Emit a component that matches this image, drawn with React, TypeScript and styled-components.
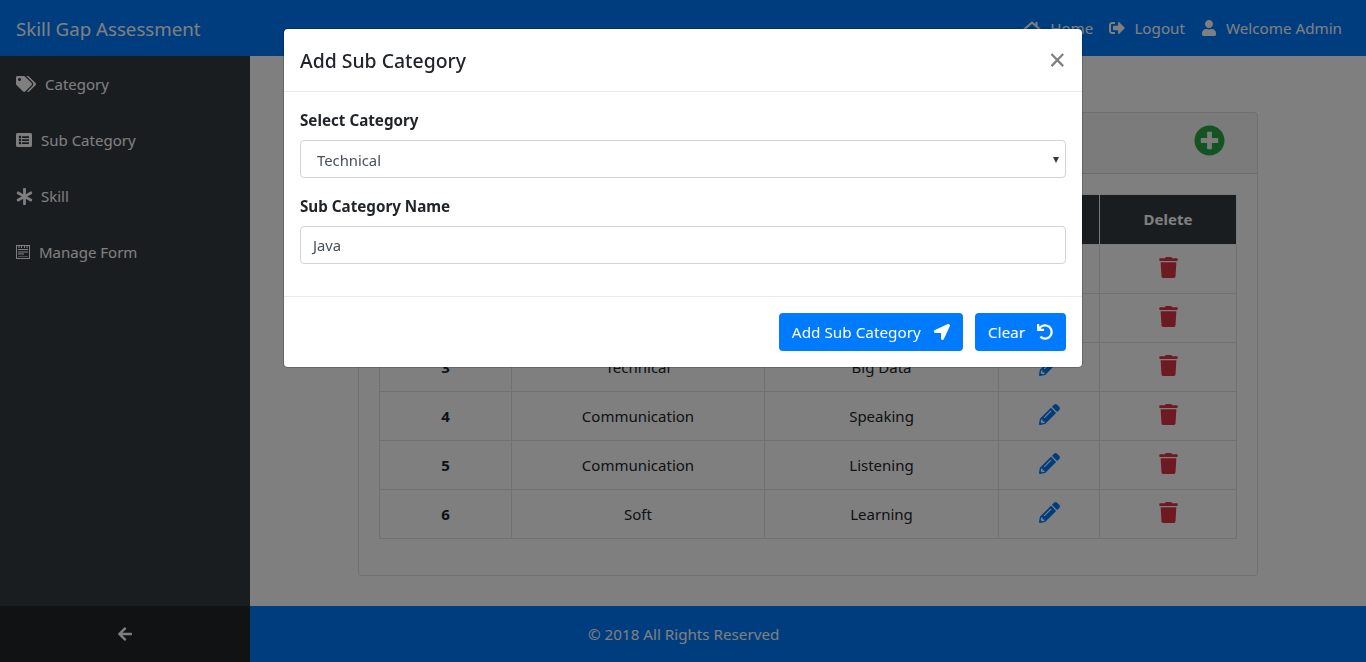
import React from 'react'
import styled, { createGlobalStyle } from 'styled-components'
import {
  FaTags,
  FaListAlt,
  FaAsterisk,
  FaSignOutAlt,
  FaUser,
  FaPlusCircle,
  FaPencilAlt,
  FaTrash,
  FaLocationArrow,
  FaUndo,
  FaArrowLeft,
} from 'react-icons/fa'

const GlobalStyle = createGlobalStyle`
  * {
    box-sizing: border-box;
  }
  html, body {
    margin: 0;
    height: 100%;
    overflow: hidden;
  }
  body {
    font-family: "Noto Sans", "Open Sans", sans-serif;
    font-size: 15px;
    color: #212529;
    background: #fff;
  }
`

const Page = styled.div`
  display: flex;
  flex-direction: column;
  height: 662px;
`

const Navbar = styled.header`
  display: flex;
  align-items: center;
  justify-content: space-between;
  height: 56px;
  padding: 0 24px 0 16px;
  background: #007bff;
`

const Brand = styled.span`
  font-size: 18.7px;
  color: #fff;
`

const NavLinks = styled.nav`
  display: flex;
  align-items: center;
  gap: 16px;
`

const NavLink = styled.a`
  display: flex;
  align-items: center;
  gap: 9px;
  color: #fff;
  font-size: 15.2px;
`

const Middle = styled.div`
  display: flex;
  flex: 1;
  min-height: 0;
`

const Sidebar = styled.aside`
  width: 250px;
  flex-shrink: 0;
  background: #343a40;
`

const SideItem = styled.div`
  display: flex;
  align-items: center;
  height: 56px;
  padding-left: 16px;
  color: #fff;
  font-size: 15px;
`

const SideLabel = styled.span<{ $gap: number }>`
  margin-left: ${({ $gap }) => $gap}px;
`

const Content = styled.main`
  flex: 1;
  padding: 56px 109px 30px 108px;
  background: #fff;
`

const Card = styled.section`
  border: 1px solid rgba(0, 0, 0, 0.125);
  border-radius: 4px;
  height: 464px;
`

const CardHeader = styled.div`
  display: flex;
  align-items: center;
  justify-content: flex-end;
  height: 61px;
  padding: 0 32px 5px 0;
  background: rgba(0, 0, 0, 0.03);
  border-bottom: 1px solid rgba(0, 0, 0, 0.125);
  color: #28a745;
`

const CardBody = styled.div`
  padding: 20px;
`

const Table = styled.table`
  width: 100%;
  border-collapse: collapse;
  table-layout: fixed;
  text-align: center;
`

const HeadCell = styled.th<{ $width: number }>`
  width: ${({ $width }) => $width}px;
  height: 50px;
  padding: 0 0 2px;
  background: #343a40;
  border: 1px solid #f4f5f6;
  color: #fff;
  font-size: 15px;
`

const Cell = styled.td<{ $strong?: boolean }>`
  height: 49px;
  padding: 0;
  border: 1px solid #dee2e6;
  font-weight: ${({ $strong }) => ($strong ? 700 : 400)};
`

const EditIcon = styled(FaPencilAlt)`
  display: block;
  margin: 0 auto 4px;
  color: #007bff;
`

const DeleteIcon = styled(FaTrash)`
  display: block;
  margin: 0 auto 4px;
  color: #dc3545;
`

const BottomBar = styled.footer`
  display: flex;
  height: 56px;
`

const Collapse = styled.div`
  display: flex;
  align-items: center;
  justify-content: center;
  width: 250px;
  background: #232527;
  color: #fff;
`

const Copyright = styled.div`
  display: flex;
  align-items: center;
  flex: 1;
  padding-left: 338px;
  background: #007bff;
  color: #fff;
  font-size: 15.2px;
`

const Backdrop = styled.div`
  position: fixed;
  inset: 0;
  background: rgba(0, 0, 0, 0.5);
`

const Modal = styled.div`
  position: fixed;
  top: 28px;
  left: 283px;
  width: 800px;
  background: #fff;
  background-clip: padding-box;
  border: 1px solid rgba(0, 0, 0, 0.2);
  border-radius: 4.8px;
`

const ModalHeader = styled.div`
  display: flex;
  align-items: center;
  justify-content: space-between;
  height: 63px;
  padding: 0 16px;
  border-bottom: 1px solid #e9ecef;
`

const ModalTitle = styled.h5`
  margin: 0;
  font-size: 19.4px;
  font-weight: 500;
`

const Close = styled.span`
  font-size: 30px;
  line-height: 1;
  font-weight: 400;
  color: #808080;
`

const ModalBody = styled.div`
  padding: 16px 16px 32px;
`

const Label = styled.label`
  display: block;
  margin-bottom: 8px;
  height: 24px;
  line-height: 24px;
  font-weight: 700;
  font-size: 15.2px;
`

const Group = styled.div`
  margin-bottom: 16px;
  &:last-child {
    margin-bottom: 0;
  }
`

const Field = styled.div<{ $inset: number }>`
  display: flex;
  align-items: center;
  justify-content: space-between;
  height: 38px;
  padding: 0 6px 0 ${({ $inset }) => $inset}px;
  border: 1px solid #ced4da;
  border-radius: 4px;
  color: #495057;
  font-size: 14.8px;
`

const SelectField = styled(Field)`
  padding-top: 2px;
`

const Caret = styled.span`
  width: 0;
  height: 0;
  border-left: 3px solid transparent;
  border-right: 3px solid transparent;
  border-top: 6px solid #343a40;
`

const ModalFooter = styled.div`
  display: flex;
  justify-content: flex-end;
  gap: 12px;
  padding: 16px;
  border-top: 1px solid #e9ecef;
`

const Button = styled.button<{ $gap: number }>`
  display: flex;
  align-items: center;
  gap: ${({ $gap }) => $gap}px;
  height: 38px;
  padding: 0 13px;
  border: 0;
  border-radius: 4px;
  background: #007bff;
  color: #fff;
  font: inherit;
  font-size: 15.3px;
`

function HomeIcon() {
  return (
    <svg width="18" height="17" viewBox="0 0 18 17" fill="none" stroke="currentColor" strokeWidth="2">
      <path d="M1 9.5 9 2.5l8 7" />
      <path d="M3.5 9v7h11V9" />
      <path d="M13.5 2v4" />
    </svg>
  )
}

function FormIcon() {
  return (
    <svg width="14" height="14" viewBox="0 0 14 14" fill="none" stroke="currentColor">
      <rect x="0.5" y="0.5" width="13" height="13" />
      <path d="M3 1v2M5.5 1v2M8.5 1v2M11 1v2" />
      <path d="M2 4.5h10M2 7h10M2 9h6" />
      <path d="M2 11.5h10" strokeOpacity="0.5" />
    </svg>
  )
}

const rows = [
  ['1', 'Technical', 'Java'],
  ['2', 'Technical', 'Python'],
  ['3', 'Technical', 'Big Data'],
  ['4', 'Communication', 'Speaking'],
  ['5', 'Communication', 'Listening'],
  ['6', 'Soft', 'Learning'],
]

export default function App() {
  return (
    <>
      <GlobalStyle />
      <Page>
        <Navbar>
          <Brand>Skill Gap Assessment</Brand>
          <NavLinks>
            <NavLink><HomeIcon />Home</NavLink>
            <NavLink><FaSignOutAlt size={16} />Logout</NavLink>
            <NavLink><FaUser size={16} />Welcome Admin</NavLink>
          </NavLinks>
        </Navbar>
        <Middle>
          <Sidebar>
            <SideItem><FaTags size={20} /><SideLabel $gap={9}>Category</SideLabel></SideItem>
            <SideItem><FaListAlt size={16} /><SideLabel $gap={9}>Sub Category</SideLabel></SideItem>
            <SideItem><FaAsterisk size={17} /><SideLabel $gap={8}>Skill</SideLabel></SideItem>
            <SideItem><FormIcon /><SideLabel $gap={9}>Manage Form</SideLabel></SideItem>
          </Sidebar>
          <Content>
            <Card>
              <CardHeader><FaPlusCircle size={31} /></CardHeader>
              <CardBody>
                <Table>
                  <thead>
                    <tr>
                      <HeadCell $width={132}>S.No</HeadCell>
                      <HeadCell $width={253}>Category</HeadCell>
                      <HeadCell $width={234}>Sub Category</HeadCell>
                      <HeadCell $width={101}>Edit</HeadCell>
                      <HeadCell $width={137}>Delete</HeadCell>
                    </tr>
                  </thead>
                  <tbody>
                    {rows.map(([no, category, sub]) => (
                      <tr key={no}>
                        <Cell $strong>{no}</Cell>
                        <Cell>{category}</Cell>
                        <Cell>{sub}</Cell>
                        <Cell><EditIcon size={21} /></Cell>
                        <Cell><DeleteIcon size={21} /></Cell>
                      </tr>
                    ))}
                  </tbody>
                </Table>
              </CardBody>
            </Card>
          </Content>
        </Middle>
        <BottomBar>
          <Collapse><FaArrowLeft size={16} /></Collapse>
          <Copyright>© 2018 All Rights Reserved</Copyright>
        </BottomBar>
      </Page>
      <Backdrop />
      <Modal>
        <ModalHeader>
          <ModalTitle>Add Sub Category</ModalTitle>
          <Close>×</Close>
        </ModalHeader>
        <ModalBody>
          <Group>
            <Label>Select Category</Label>
            <SelectField $inset={16}>Technical<Caret /></SelectField>
          </Group>
          <Group>
            <Label>Sub Category Name</Label>
            <Field $inset={12}>Java</Field>
          </Group>
        </ModalBody>
        <ModalFooter>
          <Button $gap={13}>Add Sub Category<FaLocationArrow size={16} /></Button>
          <Button $gap={12}>Clear<FaUndo size={16} /></Button>
        </ModalFooter>
      </Modal>
    </>
  )
}
